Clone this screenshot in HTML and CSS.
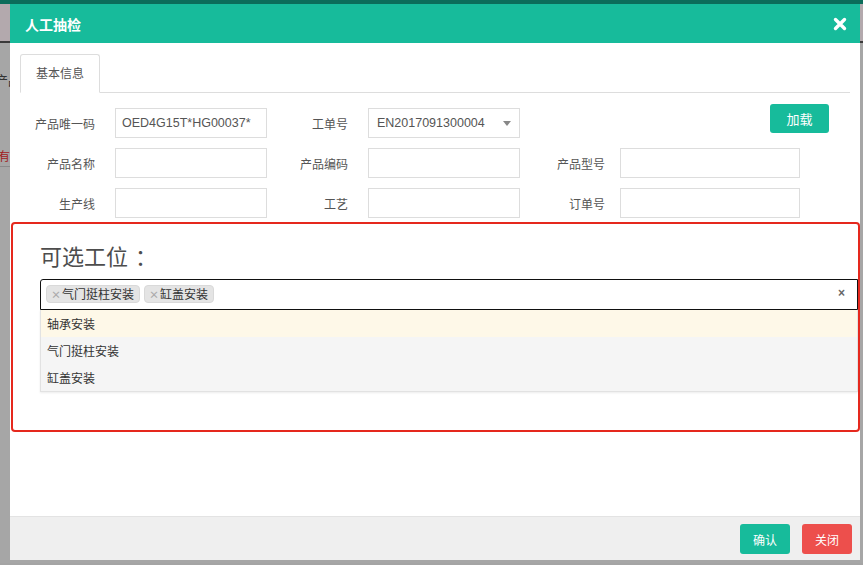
FILE: index.html
```html
<!DOCTYPE html>
<html lang="zh">
<head>
<meta charset="utf-8">
<title>人工抽检</title>
<link rel="stylesheet" href="styles.css">
</head>
<body>
<div class="page">
  <div class="page-top"></div>
  <div class="page-head"></div>
  <div class="page-main">
    <div class="page-text">产品</div>
    <div class="page-red">有</div>
    <div class="page-line"></div>
  </div>
</div>

<div class="modal">
  <div class="modal-header">
    <span class="modal-title">人工抽检</span>
    <svg class="modal-close" width="14" height="14" viewBox="0 0 14 14"><path d="M2.5 2.5 L11.5 11.5 M11.5 2.5 L2.5 11.5" stroke="#fff" stroke-width="3.4" stroke-linecap="round"/></svg>
  </div>
  <div class="modal-body">
    <div class="tabs"><div class="tab">基本信息</div></div>
    <div class="form">
      <div class="row">
        <label class="lbl w85">产品唯一码</label>
        <div class="inp w152">OED4G15T*HG00037*</div>
        <label class="lbl w81">工单号</label>
        <div class="inp w152 sel">EN2017091300004<span class="caret"></span></div>
        <button class="btn-load">加载</button>
      </div>
      <div class="row">
        <label class="lbl w85">产品名称</label>
        <div class="inp w152"></div>
        <label class="lbl w81">产品编码</label>
        <div class="inp w152"></div>
        <label class="lbl w85 l3">产品型号</label>
        <div class="inp w180"></div>
      </div>
      <div class="row">
        <label class="lbl w85">生产线</label>
        <div class="inp w152"></div>
        <label class="lbl w81">工艺</label>
        <div class="inp w152"></div>
        <label class="lbl w85 l3">订单号</label>
        <div class="inp w180"></div>
      </div>
    </div>
    <div class="station-box">
      <div class="station-title">可选工位<span class="colon">：</span></div>
      <div class="multi">
        <span class="tag"><span class="tag-x">×</span>气门挺柱安装</span>
        <span class="tag"><span class="tag-x">×</span>缸盖安装</span>
        <span class="clear">×</span>
      </div>
      <ul class="dropdown">
        <li class="opt hover">轴承安装</li>
        <li class="opt chosen">气门挺柱安装</li>
        <li class="opt chosen">缸盖安装</li>
      </ul>
    </div>
  </div>
  <div class="modal-footer">
    <button class="btn btn-ok">确认</button>
    <button class="btn btn-close">关闭</button>
  </div>
</div>
</body>
</html>
```
FILE: styles.css
```css
* { box-sizing: border-box; }
html, body { margin: 0; padding: 0; }
body {
  width: 863px;
  height: 565px;
  overflow: hidden;
  background: #a4a4a4;
  font-family: "Liberation Sans", "Noto Sans CJK SC", sans-serif;
  font-size: 12px;
  color: #555;
}
.page { width: 863px; height: 565px; }
.page-top { height: 4px; background: #0b6d5a; }
.page-head { height: 39px; background: #b3a9ad; border-bottom: 2px solid #3a3a3a; }
.page-main { position: relative; height: 520px; background: #a6a6a6; }
.page-text { padding-top: 27px; margin-left: -5px; color: #333; font-size: 13px; }
.page-red { margin-top: 58px; margin-left: -2px; color: #a12020; font-size: 12px; }
.page-line { margin-top: 2px; height: 1px; width: 10px; background: #8a8a8a; }

.modal {
  position: absolute;
  left: 10px;
  top: 4px;
  width: 850px;
  height: 556px;
  background: #fff;
  display: flex;
  flex-direction: column;
}
.modal-header {
  height: 39px;
  background: #17bb9b;
  display: flex;
  align-items: center;
  justify-content: space-between;
  padding: 0 13px 0 15px;
}
.modal-title {
  color: #fff;
  font-weight: bold;
  font-size: 14px;
  font-family: "Noto Sans CJK SC", sans-serif;
}
.modal-close { display: block; margin-top: 1px; }

.modal-body { flex: 1; padding-top: 11px; }
.tabs {
  margin: 0 10px;
  height: 39px;
  border-bottom: 1px solid #ddd;
  display: flex;
}
.tab {
  width: 80px;
  height: 39px;
  border: 1px solid #ddd;
  border-bottom: 1px solid #fff;
  border-radius: 3px 3px 0 0;
  background: #fff;
  text-align: center;
  line-height: 36px;
  font-family: "Noto Sans CJK SC", sans-serif;
  color: #555;
}

.form {
  margin-top: 15px;
  display: flex;
  flex-direction: column;
  gap: 10px;
}
.row { display: flex; align-items: center; height: 30px; }
.lbl {
  text-align: right;
  margin-right: 20px;
  font-family: "Noto Sans CJK SC", sans-serif;
  color: #555;
}
.lbl.l3 { margin-right: 15px; }
.w85 { width: 85px; }
.w81 { width: 81px; }
.w152 { width: 152px; }
.w180 { width: 180px; }
.inp {
  height: 30px;
  border: 1px solid #ddd;
  padding: 0 6px;
  line-height: 28px;
  color: #555;
  font-size: 12.5px;
}
.sel { position: relative; padding-left: 8px; }
.caret {
  position: absolute;
  right: 8px;
  top: 12px;
  width: 0; height: 0;
  border-left: 4px solid transparent;
  border-right: 4px solid transparent;
  border-top: 5px solid #888;
}
.btn-load {
  margin-left: 250px;
  align-self: flex-start;
  margin-top: -4px;
  width: 59px;
  height: 29px;
  border: none;
  border-radius: 3px;
  background: #17bb9b;
  color: #fff;
  font-family: "Noto Sans CJK SC", sans-serif;
  font-size: 13px;
  padding: 0;
}

.station-box {
  margin-top: 4px;
  margin-left: 1px;
  width: 849px;
  height: 210px;
  border: 2px solid #e5281d;
  border-radius: 4px;
  padding-left: 27px;
  overflow: hidden;
}
.station-title {
  margin-top: 16px;
  font-size: 22px;
  line-height: 30px;
  color: #4d4d4d;
  font-family: "Noto Sans CJK SC", sans-serif;
}
.colon { padding-left: 7px; }
.multi {
  margin-top: 9px;
  width: 818px;
  height: 31px;
  border: 1px solid #111;
  border-radius: 3px 0 0 0;
  display: flex;
  align-items: flex-start;
  gap: 4px;
  padding: 5px 0 0 5px;
  position: relative;
}
.tag {
  height: 18px;
  line-height: 16px;
  background: #e4e4e4;
  border: 1px solid #d9d9d9;
  border-radius: 4px;
  padding: 0 5px 0 4px;
  color: #333;
  font-family: "Noto Sans CJK SC", sans-serif;
  font-size: 12px;
}
.tag-x { color: #aaa; font-size: 10px; margin-right: 1px; font-weight: bold; }
.clear {
  margin-left: auto;
  margin-right: 12px;
  margin-top: 1px;
  color: #666;
  font-weight: bold;
  font-size: 12px;
}
.dropdown {
  list-style: none;
  margin: 0;
  padding: 0;
  width: 818px;
  border: 1px solid #e2e2e2;
  border-top: none;
  box-shadow: 0 1px 2px rgba(0,0,0,0.08);
}
.opt {
  height: 27px;
  line-height: 27px;
  padding-left: 6px;
  color: #333;
  font-family: "Noto Sans CJK SC", sans-serif;
  font-size: 12px;
}
.opt.hover { background: #fef8e8; }
.opt.chosen { background: #f5f5f5; }

.modal-footer {
  height: 44px;
  background: #efefef;
  border-top: 1px solid #e3e3e3;
  display: flex;
  justify-content: flex-end;
  align-items: flex-start;
  gap: 12px;
  padding: 7px 8px 0 0;
}
.btn {
  width: 50px;
  height: 30px;
  border: none;
  border-radius: 3px;
  color: #fff;
  font-family: "Noto Sans CJK SC", sans-serif;
  font-size: 12px;
  padding: 0;
}
.btn-ok { background: #17bb9b; }
.btn-close { background: #ed4f4c; }
```
